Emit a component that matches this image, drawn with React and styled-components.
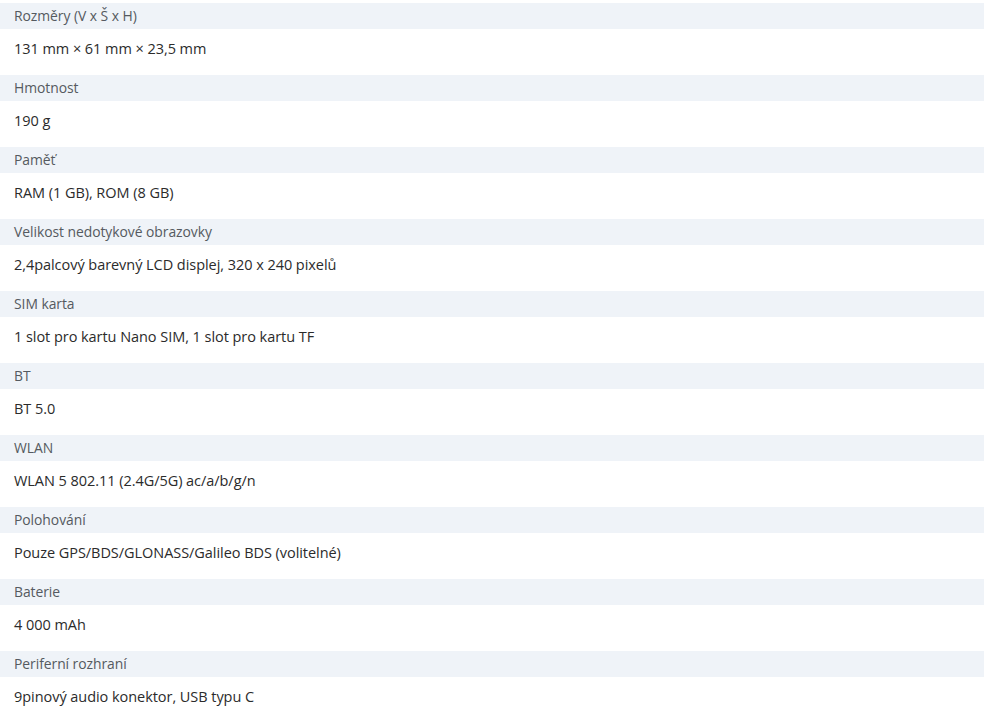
import React from "react";
import styled, { createGlobalStyle } from "styled-components";

const GlobalStyle = createGlobalStyle`
  body {
    margin: 0;
    background: #ffffff;
    font-family: "Open Sans", "Noto Sans", sans-serif;
  }
`;

const List = styled.div`
  padding-top: 3px;
  width: 984px;
`;

const Label = styled.div`
  height: 26px;
  display: flex;
  align-items: center;
  padding: 0 0 1px 14px;
  box-sizing: border-box;
  background-color: #eff3f8;
  color: #555a60;
  font-size: 13.9px;
  font-weight: 400;
  letter-spacing: -0.05px;
`;

const Value = styled.div`
  height: 46px;
  padding: 10px 0 0 14px;
  box-sizing: border-box;
  color: #2b2b2b;
  font-size: 14.5px;
  line-height: 20px;
  letter-spacing: -0.05px;
`;

const specs = [
  ["Rozměry (V x Š x H)", "131 mm × 61 mm × 23,5 mm"],
  ["Hmotnost", "190 g"],
  ["Paměť", "RAM (1 GB), ROM (8 GB)"],
  ["Velikost nedotykové obrazovky", "2,4palcový barevný LCD displej, 320 x 240 pixelů"],
  ["SIM karta", "1 slot pro kartu Nano SIM, 1 slot pro kartu TF"],
  ["BT", "BT 5.0"],
  ["WLAN", "WLAN 5 802.11 (2.4G/5G) ac/a/b/g/n"],
  ["Polohování", "Pouze GPS/BDS/GLONASS/Galileo BDS (volitelné)"],
  ["Baterie", "4 000 mAh"],
  ["Periferní rozhraní", "9pinový audio konektor, USB typu C"],
];

const App = () => {
  return (
    <>
      <GlobalStyle />
      <List>
        {specs.map(([label, value]) => (
          <React.Fragment key={label}>
            <Label>{label}</Label>
            <Value>{value}</Value>
          </React.Fragment>
        ))}
      </List>
    </>
  );
};

export default App;
